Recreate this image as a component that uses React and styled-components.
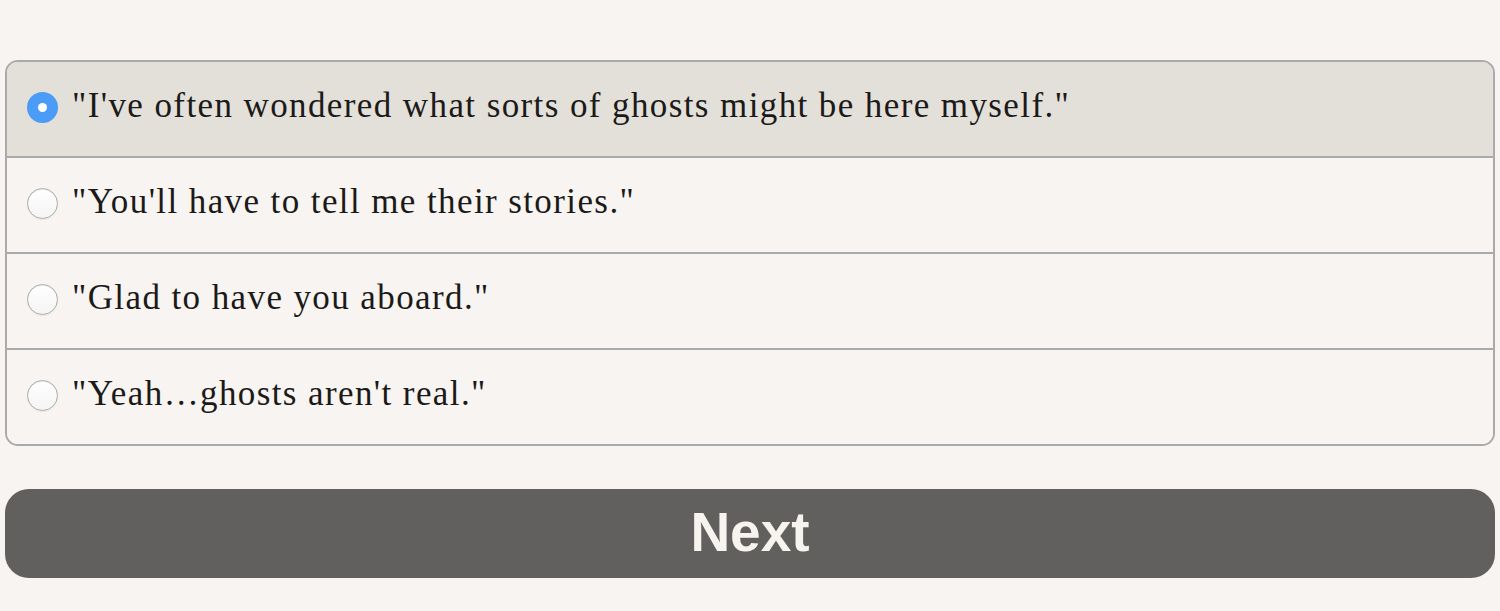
import styled, { createGlobalStyle } from "styled-components";

const GlobalStyle = createGlobalStyle`
    html, body {
        margin: 0;
        padding: 0;
        background-color: #f7f4f1;
    }
`

const choices = [
    `"I've often wondered what sorts of ghosts might be here myself."`,
    `"You'll have to tell me their stories."`,
    `"Glad to have you aboard."`,
    `"Yeah\u2026ghosts aren't real."`
];

export default function App() {
    const selected = 0;

    return (
        <Page>
            <GlobalStyle />
            <ChoiceList>
                {choices.map((text, i) => (
                    <ChoiceRow key={i} active={i === selected}>
                        <Radio active={i === selected} />
                        <ChoiceText>{text}</ChoiceText>
                    </ChoiceRow>
                ))}
            </ChoiceList>
            <NextButton>Next</NextButton>
        </Page>
    )
}

const Page = styled.div`
    box-sizing: border-box;
    width: 100vw;
    min-height: 100vh;
    padding: 60px 5px 0 5px;
    display: flex;
    flex-direction: column;
    gap: 43px;
`
const ChoiceList = styled.div`
    border: 2px solid #a9aaac;
    border-radius: 13px;
    overflow: hidden;
    display: flex;
    flex-direction: column;
`
const ChoiceRow = styled.div.withConfig({ shouldForwardProp: p => p !== "active" })`
    height: 94px;
    display: flex;
    align-items: center;
    gap: 14px;
    padding: 0 0 0 20px;
    background-color: ${p => p.active ? "#e3dfd9" : "#f7f4f1"};
    & + & {
        border-top: 2px solid #a9aaac;
    }
`
const Radio = styled.span.withConfig({ shouldForwardProp: p => p !== "active" })`
    box-sizing: border-box;
    width: 31px;
    height: 31px;
    border-radius: 50%;
    flex-shrink: 0;
    margin-bottom: 3px;
    position: relative;
    ${p => p.active ? `
        background-color: #4a9cf6;
        &::after {
            content: "";
            position: absolute;
            left: 11px;
            top: 11px;
            width: 9px;
            height: 9px;
            border-radius: 50%;
            background: #ffffff;
        }
    ` : `
        background: linear-gradient(#ffffff, #f4f4f4);
        border: 1px solid #acacac;
        box-shadow: inset 0 1px 1px rgba(0,0,0,0.08), 0 1px 1px rgba(0,0,0,0.05);
    `}
`
const ChoiceText = styled.span`
    font-family: "Liberation Serif", serif;
    font-size: 35px;
    letter-spacing: 1.4px;
    color: #1b1a18;
    padding-bottom: 6px;
`
const NextButton = styled.button`
    height: 89px;
    border: none;
    border-radius: 24px;
    background-color: #62605e;
    color: #f7f4f0;
    font-family: "Liberation Sans", Arial, sans-serif;
    font-weight: bold;
    font-size: 55px;
    padding: 0 0 3px 0;
    display: flex;
    align-items: center;
    justify-content: center;
`
